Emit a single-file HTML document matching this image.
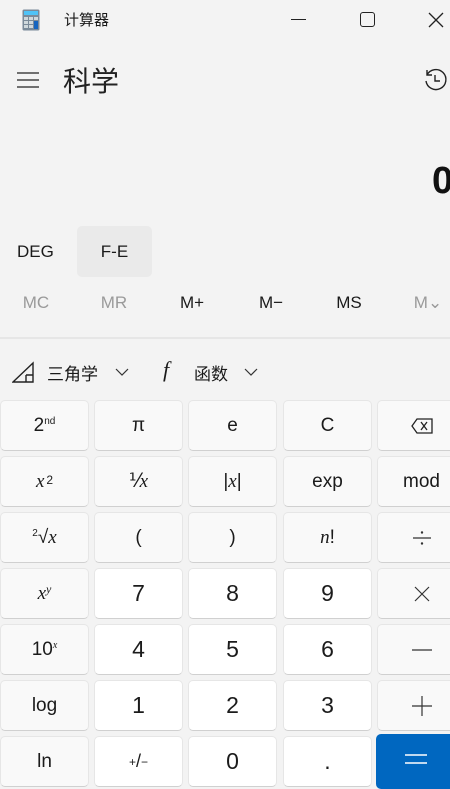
<!DOCTYPE html>
<html><head><meta charset="utf-8"><style>
*{margin:0;padding:0;box-sizing:border-box}
body{width:450px;height:779px;overflow:hidden;background:#f3f3f3;font-family:"Liberation Sans","Noto Sans CJK SC",sans-serif;color:#1a1a1a;position:relative}
.a{position:absolute}
.b{position:absolute;width:89px;height:51px;border:1px solid #e6e6e6;border-bottom-color:#d0d0d0;border-radius:5px;background:#f9f9f9;display:flex;align-items:center;justify-content:center;font-size:19px;color:#1b1b1b}
.w{background:#fff;font-size:23px}
.i{font-family:"Liberation Serif",serif;font-style:italic}
.m{position:absolute;top:293px;font-size:17px;width:60px;text-align:center}
svg.o path{stroke:#333;stroke-width:1.2;fill:none}
</style></head><body>
<svg class="a" style="left:22px;top:9px" width="18" height="22" viewBox="0 0 18 22"><rect x="0.5" y="0.5" width="17" height="21" rx="1.5" fill="#7a8a99"/><rect x="2" y="2" width="14" height="4" fill="#4fc3f7"/><g fill="#cfd8dc"><rect x="2" y="8" width="4" height="3"/><rect x="7" y="8" width="4" height="3"/><rect x="12" y="8" width="4" height="3"/><rect x="2" y="12" width="4" height="3"/><rect x="7" y="12" width="4" height="3"/><rect x="2" y="16" width="4" height="3"/><rect x="7" y="16" width="4" height="3"/></g><rect x="12" y="12" width="4" height="8" fill="#1565c0"/></svg>
<div class="a" style="left:64px;top:9px;font-size:15px">计算器</div>
<div class="a" style="left:291px;top:19px;width:15px;height:1px;background:#222"></div>
<div class="a" style="left:360px;top:12px;width:15px;height:15px;border:1.3px solid #222;border-radius:3px"></div>
<svg class="a" style="left:428px;top:12px" width="16" height="16"><path d="M1 1L15 15M15 1L1 15" stroke="#222" stroke-width="1.3"/></svg>
<svg class="a" style="left:17px;top:71px" width="22" height="18"><path d="M0 2H22M0 9H22M0 16H22" stroke="#222" stroke-width="1.3"/></svg>
<div class="a" style="left:63px;top:60px;font-size:28px;color:#222">科学</div>
<svg class="a" style="left:423px;top:67px" width="26" height="26" viewBox="0 0 26 26"><path d="M4 8A10 10 0 1 1 3 14M4 3V8H9M12 8V14H17" fill="none" stroke="#222" stroke-width="1.4"/></svg>
<div class="a" style="left:432px;top:160px;font-size:38px;font-weight:bold;color:#111">0</div>
<div class="a" style="left:17px;top:242px;font-size:17px">DEG</div>
<div class="a" style="left:77px;top:226px;width:75px;height:51px;background:#eaeaea;border-radius:5px;font-size:17px;text-align:center;line-height:51px">F-E</div>
<div class="m" style="left:6px;color:#9a9a9a">MC</div>
<div class="m" style="left:84px;color:#9a9a9a">MR</div>
<div class="m" style="left:162px">M+</div>
<div class="m" style="left:241px">M−</div>
<div class="m" style="left:319px">MS</div>
<div class="m" style="left:398px;color:#9a9a9a">M⌄</div>
<div class="a" style="left:0;top:337px;width:450px;height:2px;background:#e6e6e6"></div>
<svg class="a" style="left:12px;top:361px" width="24" height="22"><path d="M1 21L21 2V21ZM14 14H21M14 14V21" fill="none" stroke="#222" stroke-width="1.4"/></svg>
<div class="a" style="left:47px;top:360px;font-size:17px">三角学</div>
<svg class="a o" style="left:115px;top:368px" width="14" height="9"><path d="M1 1L7 7L13 1"/></svg>
<div class="a i" style="left:163px;top:357px;font-size:22px">f</div>
<div class="a" style="left:194px;top:360px;font-size:17px">函数</div>
<svg class="a o" style="left:244px;top:368px" width="14" height="9"><path d="M1 1L7 7L13 1"/></svg>

<div class="b" style="left:0;top:400px">2<sup style="font-size:10px;position:relative;top:-4px">nd</sup></div>
<div class="b" style="left:94px;top:400px">π</div>
<div class="b" style="left:188px;top:400px">e</div>
<div class="b" style="left:283px;top:400px">C</div>
<div class="b" style="left:377px;top:400px"><svg width="22" height="16"><path d="M6 1H21V15H6L1 8Z M10 4L16 12M16 4L10 12" fill="none" stroke="#222" stroke-width="1.3"/></svg></div>

<div class="b" style="left:0;top:456px"><span class="i">x</span><sup style="font-size:12px;position:relative;top:-2px;margin-left:2px">2</sup></div>
<div class="b" style="left:94px;top:456px">⅟<span class="i">x</span></div>
<div class="b" style="left:188px;top:456px">|<span class="i">x</span>|</div>
<div class="b" style="left:283px;top:456px">exp</div>
<div class="b" style="left:377px;top:456px">mod</div>

<div class="b" style="left:0;top:512px"><sup style="font-size:10px;position:relative;top:-4px">2</sup>√<span class="i">x</span></div>
<div class="b" style="left:94px;top:512px">(</div>
<div class="b" style="left:188px;top:512px">)</div>
<div class="b" style="left:283px;top:512px"><span class="i">n</span>!</div>
<div class="b" style="left:377px;top:512px"><svg class="o" width="20" height="16"><path d="M1 8H19"/><circle cx="10" cy="2.5" r="1.2" fill="#333"/><circle cx="10" cy="13.5" r="1.2" fill="#333"/></svg></div>

<div class="b" style="left:0;top:568px"><span class="i">x</span><sup class="i" style="font-size:12px;position:relative;top:-4px">y</sup></div>
<div class="b w" style="left:94px;top:568px">7</div>
<div class="b w" style="left:188px;top:568px">8</div>
<div class="b w" style="left:283px;top:568px">9</div>
<div class="b" style="left:377px;top:568px"><svg class="o" width="16" height="16"><path d="M1 1L15 15M15 1L1 15"/></svg></div>

<div class="b" style="left:0;top:624px">10<sup class="i" style="font-size:10px;position:relative;top:-4px">x</sup></div>
<div class="b w" style="left:94px;top:624px">4</div>
<div class="b w" style="left:188px;top:624px">5</div>
<div class="b w" style="left:283px;top:624px">6</div>
<div class="b" style="left:377px;top:624px"><svg class="o" width="20" height="4"><path d="M0 2H20"/></svg></div>

<div class="b" style="left:0;top:680px">log</div>
<div class="b w" style="left:94px;top:680px">1</div>
<div class="b w" style="left:188px;top:680px">2</div>
<div class="b w" style="left:283px;top:680px">3</div>
<div class="b" style="left:377px;top:680px"><svg class="o" width="20" height="20"><path d="M0 10H20M10 0V20"/></svg></div>

<div class="b" style="left:0;top:736px">ln</div>
<div class="b w" style="left:94px;top:736px;font-size:18px"><sup style="font-size:12px">+</sup>/<sub style="font-size:12px">−</sub></div>
<div class="b w" style="left:188px;top:736px">0</div>
<div class="b w" style="left:283px;top:736px">.</div>
<div class="b" style="left:376px;top:734px;width:80px;height:55px;background:#0067c0;border-color:#0067c0"><svg width="22" height="12" style="margin-top:-6px"><path d="M0 2H22M0 10H22" stroke="#fff" stroke-width="1.6"/></svg></div>
</body></html>
